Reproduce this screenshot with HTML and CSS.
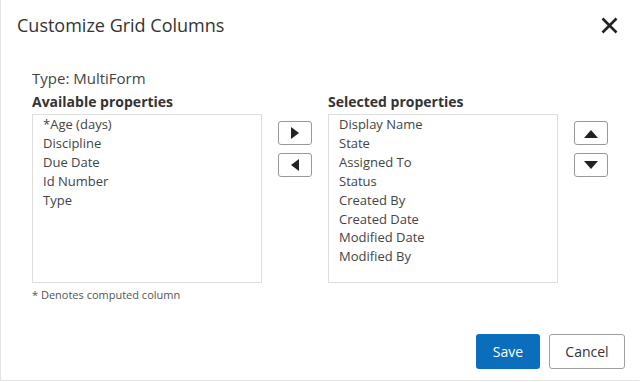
FILE: index.html
```html
<!DOCTYPE html>
<html>
<head>
<title>Customize Grid Columns</title>
<link rel="stylesheet" href="styles.css">
</head>
<body>
<div class="dialog">
  <div class="header">
    <span class="title">Customize Grid Columns</span>
    <span class="close"><svg width="17" height="17" viewBox="0 0 17 17"><path d="M1.5 1.5 L15.5 15.5 M15.5 1.5 L1.5 15.5" stroke="#222" stroke-width="2.6" stroke-linecap="butt"/></svg></span>
  </div>

  <div class="content">
    <div class="type">Type: MultiForm</div>
    <div class="columns">
      <div class="col">
        <div class="label">Available properties</div>
        <div class="list">
          <div>*Age (days)</div>
          <div>Discipline</div>
          <div>Due Date</div>
          <div>Id Number</div>
          <div>Type</div>
        </div>
        <div class="note">* Denotes computed column</div>
      </div>
      <div class="arrows">
        <span class="arr"><svg width="10" height="12" viewBox="0 0 10 12"><path d="M1 0 L9 6 L1 12 Z" fill="#222"/></svg></span>
        <span class="arr"><svg width="10" height="12" viewBox="0 0 10 12"><path d="M9 0 L1 6 L9 12 Z" fill="#222"/></svg></span>
      </div>
      <div class="col">
        <div class="label">Selected properties</div>
        <div class="list">
          <div>Display Name</div>
          <div>State</div>
          <div>Assigned To</div>
          <div>Status</div>
          <div>Created By</div>
          <div>Created Date</div>
          <div>Modified Date</div>
          <div>Modified By</div>
        </div>
      </div>
      <div class="arrows">
        <span class="arr"><svg width="14" height="9" viewBox="0 0 14 9"><path d="M0 9 L7 1 L14 9 Z" fill="#222"/></svg></span>
        <span class="arr"><svg width="14" height="9" viewBox="0 0 14 9"><path d="M0 0 L7 8 L14 0 Z" fill="#222"/></svg></span>
      </div>
    </div>
  </div>

  <div class="footer">
    <span class="btn save">Save</span>
    <span class="btn cancel">Cancel</span>
  </div>
</div>
</body>
</html>
```

FILE: styles.css
```css
html, body { margin: 0; padding: 0; background: #fff; }
body { font-family: "Open Sans", "Liberation Sans", sans-serif; color: #333; }

.dialog {
  width: 638px; height: 380px;
  border-left: 1px solid #e4e4e4; border-bottom: 1px solid #e4e4e4;
  position: relative;
}

.header { display: flex; justify-content: space-between; align-items: center;
          padding: 12px 21px 0 16px; height: 26px; }
.title { font-size: 18px; color: #333; }
.close { display: flex; margin-top: 1px; }

.content { padding: 30px 0 0 31px; }
.type { font-size: 15px; color: #444; line-height: 20px; }

.columns { display: flex; }
.col { width: 230px; }
.label { font-size: 14px; font-weight: bold; color: #333; line-height: 20px; margin-top: 4px; }
.list {
  height: 163px; border: 1px solid #dedede; margin-top: 2px;
  padding: 0 10px 4px 10px; font-size: 13px; color: #444; line-height: 18.9px;
}
.note { font-size: 11px; color: #555; margin-top: 4px; }

.arrows { display: flex; flex-direction: column; gap: 8px; padding: 33px 16px 0 16px; }
.arr {
  width: 32px; height: 22px; border: 1px solid #999; border-radius: 3px;
  display: flex; align-items: center; justify-content: center;
}

.footer { position: absolute; right: 14px; bottom: 11px; display: flex; gap: 9px; }
.btn {
  height: 35px; box-sizing: border-box; border-radius: 3px; font-size: 14px;
  display: flex; align-items: center; justify-content: center;
}
.save { width: 64px; background: #0a6ebd; color: #fff; }
.cancel { width: 76px; border: 1px solid #a0a0a0; color: #333; }
```
